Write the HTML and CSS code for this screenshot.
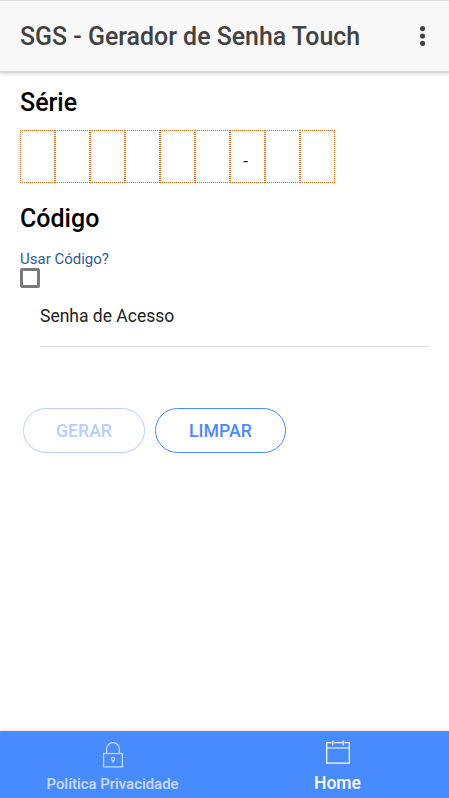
FILE: index.html
```html
<!DOCTYPE html>
<html lang="pt-BR">
<head>
  <meta charset="UTF-8">
  <meta name="viewport" content="width=device-width, initial-scale=1">
  <title>SGS - Gerador de Senha Touch</title>
  <link rel="stylesheet" href="styles.css">
</head>
<body>
  <header class="toolbar">
    <h1 class="toolbar-title">SGS - Gerador de Senha Touch</h1>
    <svg class="menu-icon" width="6" height="20" viewBox="0 0 6 20">
      <circle cx="2.5" cy="2.6" r="2.6"/>
      <circle cx="2.5" cy="10" r="2.6"/>
      <circle cx="2.5" cy="17.4" r="2.6"/>
    </svg>
  </header>

  <main class="content">
    <h2>Série</h2>
    <div class="serie">
      <span class="digit"></span>
      <span class="digit"></span>
      <span class="digit"></span>
      <span class="digit"></span>
      <span class="digit"></span>
      <span class="digit"></span>
      <span class="digit">-</span>
      <span class="digit"></span>
      <span class="digit"></span>
    </div>

    <h2 class="codigo-title">Código</h2>
    <label class="usar-codigo">
      <span>Usar Código?</span>
      <span class="checkbox"></span>
    </label>

    <div class="senha">Senha de Acesso</div>

    <div class="buttons">
      <button class="button" disabled>GERAR</button>
      <button class="button">LIMPAR</button>
    </div>
  </main>

  <nav class="tabs">
    <a class="tab">
      <svg class="tab-icon" width="20" height="26" viewBox="0 0 20 26">
        <path d="M3.6 11.5V7a6.4 6.4 0 0 1 12.8 0v4.5"/>
        <rect x=".6" y="11.5" width="18.8" height="13.4"/>
        <circle cx="10" cy="17" r="1.6"/>
        <path d="M10 18.5V21"/>
      </svg>
      <span>Política Privacidade</span>
    </a>
    <a class="tab active">
      <svg class="tab-icon" width="24" height="24" viewBox="0 0 24 24">
        <path d="M5.5 2.6H.7v20.6h22.6V2.6h-4.8M8 2.6h8.2M.7 8h22.6"/>
        <path d="M6.8.5v5M17.2.5v5"/>
      </svg>
      <span>Home</span>
    </a>
  </nav>
</body>
</html>
```
FILE: styles.css
```css
:root {
  --primary: #488aff;
  --text-color: #424242;
  --orange: #d2691e;
}

* {
  box-sizing: border-box;
}

body {
  display: flex;
  flex-direction: column;
  height: 100vh;
  margin: 0;
  overflow: hidden;
  font-family: Roboto, sans-serif;
  background: #fff;
  color: #000;
}

/* Toolbar */
.toolbar {
  display: flex;
  align-items: center;
  justify-content: space-between;
  height: 71px;
  padding: 0 23px 0 20px;
  border-top: 1px solid #dedede;
  background: #f8f8f8;
  box-shadow: 0 2px 0 #dadada, 0 3px 3px rgba(0, 0, 0, .14);
}

.toolbar-title {
  margin: 0;
  font-size: 24.9px;
  font-weight: 470;
  color: var(--text-color);
}

.menu-icon {
  fill: var(--text-color);
}

/* Content */
.content {
  flex: 1;
  padding: 17px 19px 0 20px;
}

h2 {
  margin: 0;
  font-size: 25px;
  font-weight: 470;
  line-height: 30px;
}

.serie {
  display: flex;
  margin-top: 12px;
}

.digit {
  width: 35px;
  height: 53px;
  padding-right: 4px;
  border: 1px dotted var(--orange);
  font-size: 17px;
  line-height: 61px;
  text-align: center;
}

.codigo-title {
  margin-top: 21px;
}

.usar-codigo {
  display: block;
  margin-top: 16px;
  font-size: 15px;
  line-height: 18px;
  color: #325a96;
}

.checkbox {
  display: block;
  width: 20px;
  height: 20px;
  border: 3px solid #7a7a7a;
  border-radius: 2px;
}

.senha {
  height: 59px;
  margin: 0 0 0 20px;
  border-bottom: 1px solid #dedede;
  font-size: 17.5px;
  line-height: 56px;
  color: #222;
}

.buttons {
  display: flex;
  gap: 10px;
  margin: 61px 0 0 3px;
}

.button {
  width: 122px;
  height: 45px;
  padding: 0;
  border: 1px solid var(--primary);
  border-radius: 23px;
  background: transparent;
  font-family: inherit;
  font-size: 17.7px;
  font-weight: 490;
  color: var(--primary);
}

.button:last-child {
  width: 131px;
}

.button:disabled {
  opacity: .4;
}

/* Tabs */
.tabs {
  display: flex;
  height: 67px;
  padding-left: 1px;
  background: var(--primary);
  box-shadow: 0 -1px 2px rgba(0, 0, 0, .12);
}

.tab {
  display: flex;
  flex: 1;
  flex-direction: column;
  align-items: center;
  padding-top: 11px;
  font-size: 14.9px;
  font-weight: 460;
  line-height: 18px;
  color: #fff;
  opacity: .7;
}

.tab span {
  margin-top: 7px;
}

.tab.active {
  padding: 9px 0 0 2px;
  font-size: 17.5px;
  font-weight: 490;
  line-height: 20px;
  opacity: 1;
}

.tab.active span {
  margin-top: 9px;
}

.tab-icon {
  fill: none;
  stroke: #fff;
  stroke-width: 1.2;
}
```
